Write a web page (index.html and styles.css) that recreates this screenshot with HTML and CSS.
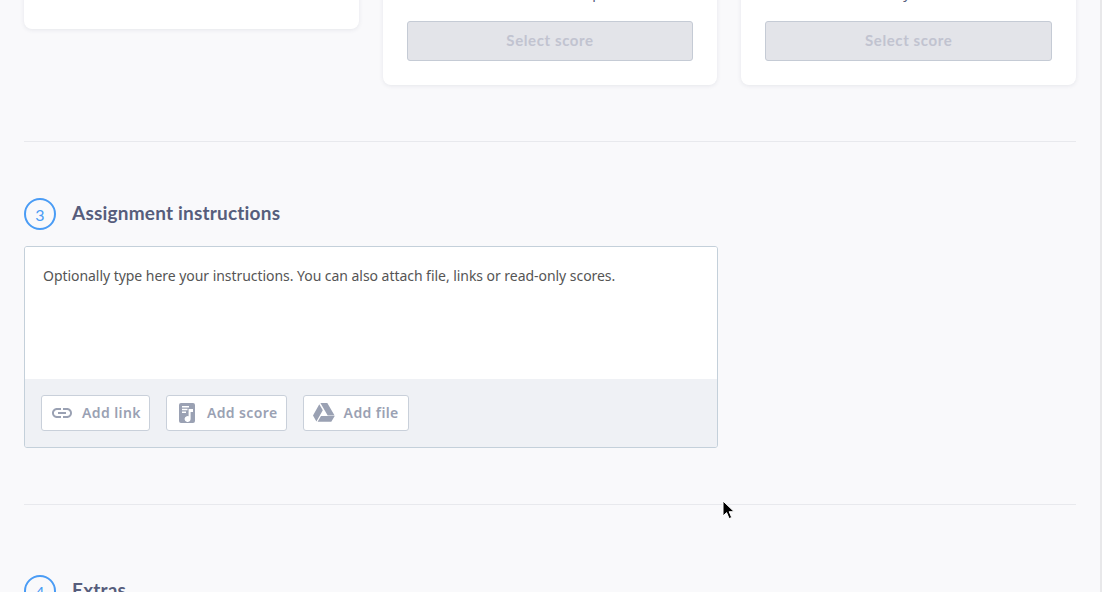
FILE: index.html
```html
<!DOCTYPE html>
<html lang="en">
  <head>
    <meta charset="UTF-8" />
    <meta name="viewport" content="width=device-width, initial-scale=1.0" />
    <title>New assignment</title>
    <link rel="stylesheet" href="styles.css">
  </head>

  <body>
    <div class="page">
      <!-- Step 2, scrolled mostly out of view -->
      <div class="cards">
        <div class="card card-short">
          <p class="card-text">Blank sheet</p>
        </div>
        <div class="card">
          <p class="card-text">Collaborate on a part</p>
          <button class="select-btn" disabled>Select score</button>
        </div>
        <div class="card">
          <p class="card-text">Write on any blank sheet</p>
          <button class="select-btn" disabled>Select score</button>
        </div>
      </div>

      <hr class="divider" />

      <div class="step-head">
        <span class="step-num">3</span>
        <h2>Assignment instructions</h2>
      </div>

      <div class="editor">
        <div class="editor-text">Optionally type here your instructions. You can also attach file, links or read-only scores.</div>
        <div class="editor-tools">
          <button class="tool-btn tool-link">
            <svg class="icon" width="24" height="24" viewBox="0 0 24 24"><path d="M3.9 12c0-1.71 1.39-3.1 3.1-3.1h4V7H7c-2.76 0-5 2.24-5 5s2.24 5 5 5h4v-1.9H7c-1.71 0-3.1-1.39-3.1-3.1zM8 13h8v-2H8v2zm9-6h-4v1.9h4c1.71 0 3.1 1.39 3.1 3.1s-1.39 3.1-3.1 3.1h-4V17h4c2.76 0 5-2.24 5-5s-2.24-5-5-5z"/></svg>
            Add link
          </button>
          <button class="tool-btn tool-score">
            <svg class="icon" width="16" height="20" viewBox="0 0 16 20"><path fill-rule="evenodd" d="M2 0h12a2 2 0 0 1 2 2v16a2 2 0 0 1-2 2H2a2 2 0 0 1-2-2V2a2 2 0 0 1 2-2zm1 3v1.4h7V3H3zm0 2.8v1.4h5.5V5.8H3zm0 2.8V10h4V8.6H3zM9.6 6v7.2a3 3 0 1 0 2 2.8V9H14V6H9.6z"/></svg>
            Add score
          </button>
          <button class="tool-btn">
            <svg class="icon" width="22" height="19" viewBox="0 0 22 19"><path d="M7.4 0h6.9l7.3 12.4h-6.9L7.4 0zM6.3 1.3l3.5 6L3.4 18.6 0 12.6 6.3 1.3zM8 12.9h13.7l-3.4 5.9H4.6L8 12.9z"/></svg>
            Add file
          </button>
        </div>
      </div>

      <hr class="divider" />

      <div class="step-head step-last">
        <span class="step-num">4</span>
        <h2>Extras</h2>
      </div>
    </div>

    <svg class="cursor" width="14" height="20" viewBox="0 0 14 20"><path d="M1 1v15l3.6-3.4 2.5 6 2.6-1.1-2.5-5.8h5L1 1z" fill="#000" stroke="#fff" stroke-width="1"/></svg>
  </body>
</html>
```

FILE: styles.css
```css
* {
  margin: 0;
  padding: 0;
  box-sizing: border-box;
}

html,
body {
  height: 592px;
  overflow: hidden;
}

body {
  background-color: #f9f9fb;
  font-family: "Noto Sans", sans-serif;
  color: #555;
  border-right: 2px solid #e8e8ea;
  position: relative;
}

.page {
  margin-top: -60px;
  padding: 0 24px;
}

.cards {
  display: flex;
  align-items: flex-start;
  gap: 24px;
}

.card {
  flex: 1;
  height: 145px;
  padding: 0 24px;
  background-color: white;
  border-radius: 8px;
  box-shadow: 0 1px 4px rgba(60, 70, 100, 0.1);
}

.card-short {
  height: 89px;
}

.card-text {
  height: 60px;
  padding-top: 41px;
  margin-bottom: 21px;
  text-align: center;
  font-size: 14px;
  line-height: 24px;
  color: #565d7c;
}

.card-short .card-text {
  margin-bottom: 0;
}

.select-btn {
  display: block;
  width: 100%;
  height: 40px;
  padding-bottom: 2px;
  background-color: #e3e4e9;
  border: 1px solid #c5cbd5;
  border-radius: 3px;
  font-family: "Lato", sans-serif;
  font-weight: 700;
  font-size: 15px;
  letter-spacing: 0.6px;
  color: #c1c3d0;
}

.divider {
  margin-top: 56px;
  border: none;
  border-top: 1px solid #e8e9ed;
}

.step-head {
  display: flex;
  align-items: center;
  gap: 16px;
  margin-top: 56px;
  height: 32px;
}

.step-last {
  margin-top: 70px;
}

.step-num {
  width: 32px;
  height: 32px;
  display: flex;
  align-items: center;
  justify-content: center;
  border: 2px solid #4a9cf5;
  border-radius: 50%;
  font-family: "Lato", sans-serif;
  font-size: 16px;
  color: #4a9cf5;
}

h2 {
  padding-bottom: 4px;
  font-family: "Lato", sans-serif;
  font-size: 19px;
  font-weight: 700;
  letter-spacing: 0.2px;
  color: #565d7c;
}

.editor {
  width: 694px;
  height: 202px;
  margin-top: 16px;
  display: flex;
  flex-direction: column;
  border: 1px solid #c4d0da;
  border-radius: 3px;
  overflow: hidden;
}

.editor-text {
  height: 132px;
  padding: 18px;
  background-color: white;
  font-size: 14px;
  line-height: 21px;
  letter-spacing: -0.045px;
}

.editor-tools {
  flex: 1;
  display: flex;
  align-items: center;
  gap: 16px;
  padding: 0 16px;
  background-color: #eff1f5;
}

.tool-btn {
  height: 36px;
  display: flex;
  align-items: center;
  gap: 9px;
  padding: 0 9px 1px;
  background-color: white;
  border: 1px solid #c9d0da;
  border-radius: 3px;
  font-family: "Noto Sans", sans-serif;
  font-size: 14px;
  font-weight: 600;
  letter-spacing: 0.4px;
  color: #9aa1b3;
}

.tool-link {
  gap: 8px;
  padding-left: 8px;
  padding-right: 8px;
}

.tool-score {
  gap: 12px;
  padding-left: 12px;
  padding-right: 8px;
}

.icon {
  flex: none;
  fill: #9aa1b3;
}

.cursor {
  position: absolute;
  left: 722px;
  top: 500px;
}
```
